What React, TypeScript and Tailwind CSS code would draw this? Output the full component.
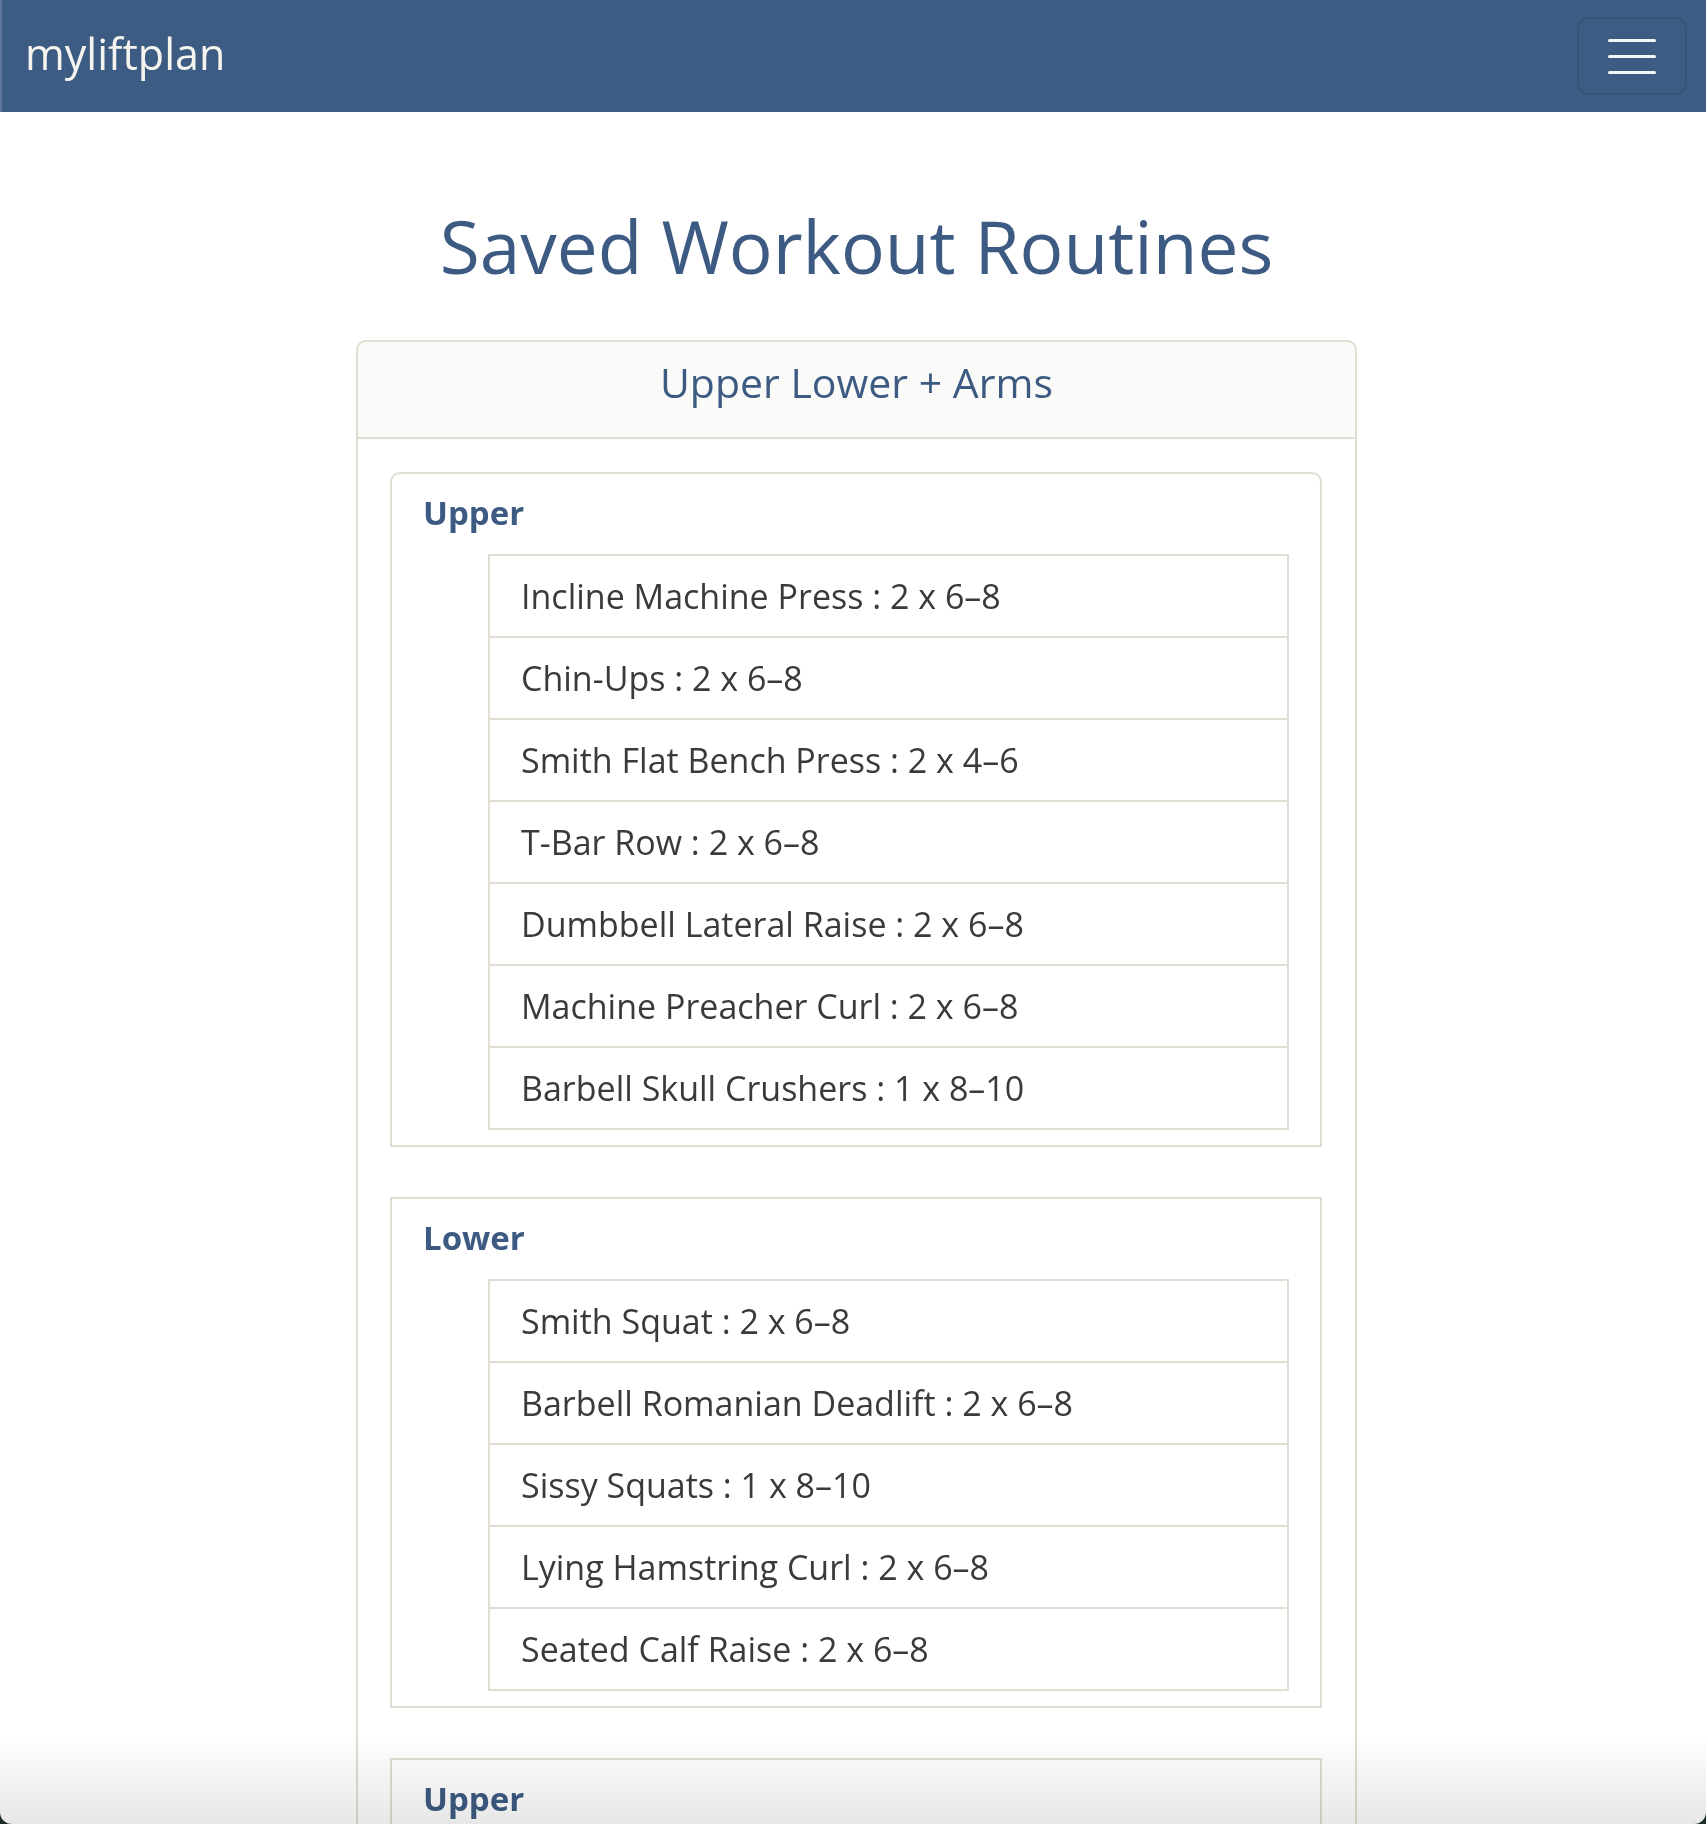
import React from "react";

const upper = [
  "Incline Machine Press : 2 x 6–8",
  "Chin-Ups : 2 x 6–8",
  "Smith Flat Bench Press : 2 x 4–6",
  "T-Bar Row : 2 x 6–8",
  "Dumbbell Lateral Raise : 2 x 6–8",
  "Machine Preacher Curl : 2 x 6–8",
  "Barbell Skull Crushers : 1 x 8–10",
];

const lower = [
  "Smith Squat : 2 x 6–8",
  "Barbell Romanian Deadlift : 2 x 6–8",
  "Sissy Squats : 1 x 8–10",
  "Lying Hamstring Curl : 2 x 6–8",
  "Seated Calf Raise : 2 x 6–8",
];

function Section({ title, items, first }: { title: string; items: string[]; first?: boolean }) {
  return (
    <div
      className={
        "border-2 border-[#e2ddd2] bg-white pt-[22px] pb-[15px] pl-[31px] pr-[31px] " +
        (first ? "rounded-t-[10px]" : "")
      }
    >
      <h3 className="text-[33px] leading-none font-bold text-[#3d5b82] mb-[25px]">{title}</h3>
      <ul className="ml-[65px] border-2 border-[#e2ddd2]">
        {items.map((it, i) => (
          <li
            key={i}
            className={
              "flex items-center pl-[31px] text-[34px] text-[#3a3a38] leading-none " +
              (i > 0 ? "h-[82px] border-t-2 border-[#e2ddd2]" : "h-[80px]")
            }
          >
            {it}
          </li>
        ))}
      </ul>
    </div>
  );
}

export default function App() {
  return (
    <div className="h-[1824px] bg-[#1d2a2a] overflow-hidden">
      <div className="relative h-[1824px] overflow-hidden bg-white rounded-b-[12px] font-['Open_Sans','Noto_Sans',sans-serif]">
        <nav className="h-[112px] bg-[#3d5c83] border-l-2 border-[#5d7699] flex items-center justify-between pl-[23px] pr-[19px]">
          <span className="text-[43px] leading-none text-[#f6f4ef] pb-[6px]">myliftplan</span>
          <button className="w-[110px] h-[78px] rounded-[12px] border-2 border-[#36537a] flex flex-col items-center justify-center gap-[13px]">
            <span className="block w-[48px] h-[3px] rounded bg-[#f4f4f6]" />
            <span className="block w-[48px] h-[3px] rounded bg-[#f4f4f6]" />
            <span className="block w-[48px] h-[3px] rounded bg-[#f4f4f6]" />
          </button>
        </nav>
        <main className="flex flex-col items-center pl-[7px]">
          <h1 className="mt-[97px] text-[73px] leading-none text-[#3d5b82] font-normal">
            Saved Workout Routines
          </h1>
          <div className="mt-[58px] w-[1001px] border-2 border-[#e2ddd2] rounded-[10px] bg-white">
            <div className="h-[97px] flex items-center justify-center pb-[14px] bg-[#fafaf8] border-b-2 border-[#e2ddd2] rounded-t-[10px]">
              <span className="text-[41px] leading-none text-[#3d5b82]">Upper Lower + Arms</span>
            </div>
            <div className="pt-[33px] pl-[32px] pr-[33px] flex flex-col gap-[50px]">
              <Section title="Upper" items={upper} first />
              <Section title="Lower" items={lower} />
              <Section title="Upper" items={upper} />
            </div>
          </div>
        </main>
        <div className="pointer-events-none absolute inset-x-0 bottom-0 h-[90px] mix-blend-multiply bg-gradient-to-b from-[#ffffff] to-[#e7e7e7]" />
      </div>
    </div>
  );
}
